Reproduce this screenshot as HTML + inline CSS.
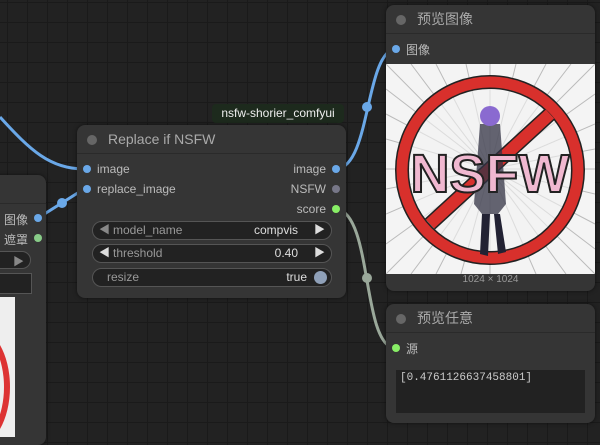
<!DOCTYPE html>
<html><head><meta charset="utf-8"><style>
*{margin:0;padding:0;box-sizing:border-box}
body{width:600px;height:429px;overflow:hidden;background:#222;font-family:"Liberation Sans","Noto Sans CJK SC",sans-serif;position:relative;
background-image:linear-gradient(#1a1a1a 1px,transparent 1px),linear-gradient(90deg,#1a1a1a 1px,transparent 1px);background-size:20px 20px;background-position:7px 2px}
.node{position:absolute;background:#353535;border-radius:8px;box-shadow:0 0 4px #0008}
.title{height:29px;border-bottom:1px solid #2a2a2a;color:#aaa;font-size:14px;line-height:29px;padding-left:31px;position:relative}
.title:before{content:"";position:absolute;left:10px;top:10px;width:10px;height:10px;border-radius:50%;background:#666}
.t{position:absolute;font-size:12px;color:#bbb;white-space:nowrap}
.dot{position:absolute;width:8px;height:8px;border-radius:50%}
.w{position:absolute;left:15px;width:240px;height:19px;border:1px solid #555;border-radius:10px;background:#222;font-size:12px;color:#bbb;line-height:17px}
</style></head><body>
<svg style="position:absolute;left:0;top:0" width="600" height="429">
<path d="M0,117 C30,150 50,169 84,169" stroke="#6aa8e8" stroke-width="3" fill="none"/>
<path d="M38,218 L84,189" stroke="#6aa8e8" stroke-width="3" fill="none"/>
<circle cx="62" cy="203" r="5" fill="#6aa8e8"/>
<path d="M337,169 C370,165 365,60 393,49" stroke="#6aa8e8" stroke-width="3" fill="none"/>
<circle cx="367" cy="107" r="5" fill="#6aa8e8"/>
<path d="M337,209 C372,215 362,340 393,348" stroke="#9aa89a" stroke-width="3" fill="none"/>
<circle cx="367" cy="278" r="5" fill="#9aa89a"/>
</svg>
<div class="node" style="left:-20px;top:175px;width:66px;height:270px">
<div class="title" style="height:29px"></div>
<div class="t" style="left:24px;top:36px">图像</div><div class="dot" style="left:54px;top:39px;background:#6aa8e8"></div>
<div class="t" style="left:24px;top:56px">遮罩</div><div class="dot" style="left:54px;top:59px;background:#8c8"></div>
<div style="position:absolute;left:0;top:76px;width:51px;height:18px;border:1px solid #555;border-radius:9px;background:#222"><span style="position:absolute;right:6px;top:1px;font-size:11px;color:#888">▶</span></div>
<div style="position:absolute;left:0;top:98px;width:52px;height:21px;border:1px solid #555;background:#222"></div>
<div style="position:absolute;left:0;top:122px;width:35px;height:140px;background:#eee;overflow:hidden"><div style="position:absolute;left:-40px;top:30px;width:70px;height:120px;border:6px solid #d33;border-radius:50%"></div></div>
</div>
<div style="position:absolute;left:212px;top:104px;width:132px;height:19px;background:#1d2a1d;border-radius:4px;color:#eee;font-size:12px;line-height:19px;text-align:center">nsfw-shorier_comfyui</div>
<div class="node" style="left:77px;top:125px;width:269px;height:173px">
<div class="title">Replace if NSFW</div>
<div class="dot" style="left:6px;top:40px;background:#6aa8e8"></div><div class="t" style="left:20px;top:37px">image</div>
<div class="dot" style="left:6px;top:60px;background:#6aa8e8"></div><div class="t" style="left:20px;top:57px">replace_image</div>
<div class="t" style="right:20px;top:37px">image</div><div class="dot" style="right:6px;top:40px;background:#6aa8e8"></div>
<div class="t" style="right:20px;top:57px">NSFW</div><div class="dot" style="right:6px;top:60px;background:#778"></div>
<div class="t" style="right:20px;top:77px">score</div><div class="dot" style="right:6px;top:80px;background:#8e6"></div>
<div class="w" style="top:96px"><span style="position:absolute;left:6px;color:#888;font-size:11px">◀</span><span style="position:absolute;left:20px;color:#999">model_name</span><span style="position:absolute;right:33px;color:#ddd">compvis</span><span style="position:absolute;right:6px;color:#ddd;font-size:11px">▶</span></div>
<div class="w" style="top:119px"><span style="position:absolute;left:6px;color:#ddd;font-size:11px">◀</span><span style="position:absolute;left:20px;color:#999">threshold</span><span style="position:absolute;right:33px;color:#ddd">0.40</span><span style="position:absolute;right:6px;color:#ddd;font-size:11px">▶</span></div>
<div class="w" style="top:143px"><span style="position:absolute;left:14px;color:#999">resize</span><span style="position:absolute;right:24px;color:#ddd">true</span><span style="position:absolute;right:4px;top:2px;width:13px;height:13px;border-radius:50%;background:#8fa0b8"></span></div>
</div>
<div class="node" style="left:386px;top:5px;width:209px;height:286px">
<div class="title">预览图像</div>
<div class="dot" style="left:6px;top:40px;background:#6aa8e8"></div><div class="t" style="left:20px;top:36px">图像</div>
<svg style="position:absolute;left:0;top:59px" width="209" height="210" viewBox="0 0 209 210">
<rect width="209" height="210" fill="#f4f4f4"/>
<g stroke="#bbb" stroke-width="1">
<path d="M104,105 L0,0 M104,105 L50,0 M104,105 L104,0 M104,105 L160,0 M104,105 L209,0 M104,105 L209,60 M104,105 L209,105 M104,105 L209,160 M104,105 L209,210 M104,105 L150,210 M104,105 L104,210 M104,105 L50,210 M104,105 L0,210 M104,105 L0,150 M104,105 L0,105 M104,105 L0,50 M104,105 L25,0 M104,105 L80,0 M104,105 L130,0 M104,105 L185,0 M104,105 L209,30 M104,105 L209,85 M104,105 L209,130 M104,105 L209,185 M104,105 L180,210 M104,105 L75,210 M104,105 L25,210 M104,105 L0,180 M104,105 L0,125 M104,105 L0,75 M104,105 L0,25"/>
</g>
<circle cx="104" cy="106" r="81" fill="#f2f2f2" fill-opacity=".6"/>
<circle cx="104" cy="106" r="88" fill="none" stroke="#222" stroke-width="14"/>
<circle cx="104" cy="106" r="88" fill="none" stroke="#d8302c" stroke-width="11"/>
<line x1="44" y1="160" x2="164" y2="50" stroke="#222" stroke-width="15"/>
<line x1="44" y1="160" x2="164" y2="50" stroke="#d8302c" stroke-width="12"/>
<path d="M94,60 L114,60 L120,140 L112,150 L96,150 L88,140 Z" fill="#334" opacity=".75"/>
<path d="M96,150 L94,190 L102,192 L104,150 M108,150 L112,190 L120,188 L114,150" fill="#223"/>
<circle cx="104" cy="52" r="10" fill="#8a6ad0"/>
<text x="104" y="128" text-anchor="middle" font-family="Liberation Sans" font-weight="bold" font-size="54" fill="#f0b8d0" stroke="#222" stroke-width="2">NSFW</text>
</svg>
<div class="t" style="left:0;width:209px;text-align:center;top:269px;font-size:10px;color:#999">1024 × 1024</div>
</div>
<div class="node" style="left:386px;top:304px;width:209px;height:119px">
<div class="title">预览任意</div>
<div class="dot" style="left:6px;top:40px;background:#8e6"></div><div class="t" style="left:20px;top:36px">源</div>
<div style="position:absolute;left:10px;top:66px;width:189px;height:43px;background:#222;color:#ccc;font-family:'Liberation Mono',monospace;font-size:11px;padding:2px 4px">[0.4761126637458801]</div>
</div>
</body></html>
